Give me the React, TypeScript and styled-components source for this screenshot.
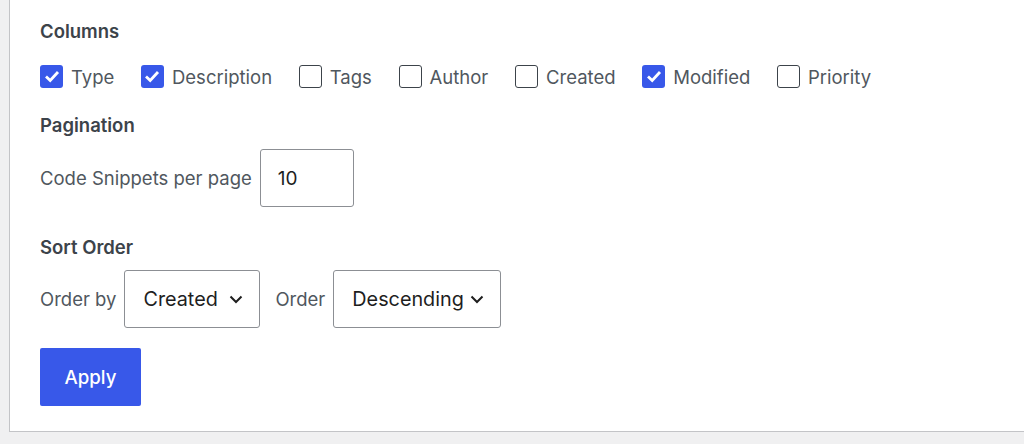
import styled, { createGlobalStyle } from "styled-components";

const GlobalStyle = createGlobalStyle`
  html, body {
    margin: 0;
    padding: 0;
    background: #f0f0f1;
    font-family: Inter, "Noto Sans", sans-serif;
  }
`;

const Panel = styled.div`
  margin-left: 9px;
  margin-right: -10px;
  background: #fff;
  border-left: 1px solid #c3c4c7;
  border-bottom: 1px solid #c3c4c7;
  padding: 20px 0 25px 30px;
`;

const Heading = styled.h3<{ $top?: number }>`
  margin: ${(p) => p.$top ?? 0}px 0 0;
  font-size: 18.5px;
  line-height: 22px;
  font-weight: 600;
  color: #3c434a;
`;

const Row = styled.div<{ $top: number; $gap?: number }>`
  display: flex;
  align-items: center;
  margin-top: ${(p) => p.$top}px;
  gap: ${(p) => p.$gap ?? 8}px;
`;

const CheckItem = styled.label`
  display: flex;
  align-items: center;
  gap: 8px;
  margin-right: 26.7px;
  font-size: 18.5px;
  color: #50575e;
`;

const Box = styled.span<{ $checked: boolean }>`
  width: 23px;
  height: 23px;
  box-sizing: border-box;
  border-radius: 3px;
  display: flex;
  align-items: center;
  justify-content: center;
  background: ${(p) => (p.$checked ? "#3858e9" : "#fff")};
  border: ${(p) => (p.$checked ? "none" : "1.5px solid #3c434a")};
`;

const Label = styled.span<{ $indent?: number }>`
  margin-left: ${(p) => p.$indent ?? 0}px;
  font-size: 18.5px;
  color: #50575e;
`;

const TextInput = styled.div`
  width: 94px;
  height: 58px;
  box-sizing: border-box;
  border: 1px solid #8c8f94;
  border-radius: 3px;
  display: flex;
  align-items: center;
  padding-left: 17px;
  font-size: 19px;
  color: #1e1e1e;
`;

const Select = styled.div<{ $width: number }>`
  width: ${(p) => p.$width}px;
  height: 58px;
  box-sizing: border-box;
  border: 1px solid #8c8f94;
  border-radius: 3px;
  display: flex;
  align-items: center;
  justify-content: space-between;
  padding: 0 16px 0 18px;
  font-size: 19.8px;
  color: #1e1e1e;
`;

const Button = styled.button`
  margin-top: 20px;
  width: 101px;
  height: 58px;
  border: none;
  border-radius: 2px;
  background: #3858e9;
  color: #fff;
  font-family: Inter, "Noto Sans", sans-serif;
  font-size: 18.7px;
  font-weight: 500;
  display: block;
`;

const Check = () => (
  <svg width="16" height="13" viewBox="0 0 16 13">
    <path d="M2 6.5 L6.2 10.5 L14 2" fill="none" stroke="#fff" strokeWidth="2.8" />
  </svg>
);

const Chevron = () => (
  <svg width="14" height="9" viewBox="0 0 14 9">
    <path d="M1.5 1.5 L7 7 L12.5 1.5" fill="none" stroke="#1e1e1e" strokeWidth="2" />
  </svg>
);

const columns: [string, boolean][] = [
  ["Type", true],
  ["Description", true],
  ["Tags", false],
  ["Author", false],
  ["Created", false],
  ["Modified", true],
  ["Priority", false],
];

export default function App() {
  return (
    <>
      <GlobalStyle />
      <Panel>
        <Heading>Columns</Heading>
        <Row $top={23} $gap={0}>
          {columns.map(([name, checked]) => (
            <CheckItem key={name}>
              <Box $checked={checked}>{checked && <Check />}</Box>
              {name}
            </CheckItem>
          ))}
        </Row>
        <Heading $top={26}>Pagination</Heading>
        <Row $top={13}>
          <Label>Code Snippets per page</Label>
          <TextInput>10</TextInput>
        </Row>
        <Heading $top={29}>Sort Order</Heading>
        <Row $top={12}>
          <Label>Order by</Label>
          <Select $width={136}>
            Created <Chevron />
          </Select>
          <Label $indent={7}>Order</Label>
          <Select $width={168}>
            Descending <Chevron />
          </Select>
        </Row>
        <Button>Apply</Button>
      </Panel>
    </>
  );
}
